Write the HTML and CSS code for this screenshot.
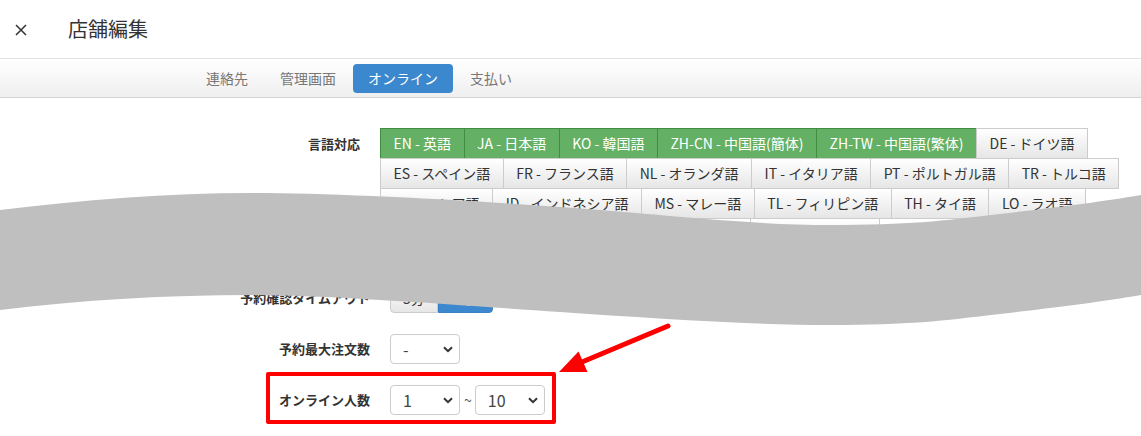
FILE: index.html
```html
<!DOCTYPE html>
<html lang="ja">
<head>
    <meta charset="UTF-8">
    <meta name="viewport" content="width=device-width, initial-scale=1.0">
    <title>店舗編集</title>
    <link rel="stylesheet" href="styles.css">
</head>
<body>

    <header class="modal-header">
        <button class="close" type="button" aria-label="close">
            <svg width="12" height="12" viewBox="0 0 12 12"><path d="M1 1L11 11M11 1L1 11" stroke="#333" stroke-width="1.5" fill="none"/></svg>
        </button>
        <h4 class="modal-title">店舗編集</h4>
    </header>

    <nav class="tab-bar">
        <ul class="tabs">
            <li><a href="#">連絡先</a></li>
            <li><a href="#">管理画面</a></li>
            <li class="active"><a href="#">オンライン</a></li>
            <li><a href="#">支払い</a></li>
        </ul>
    </nav>

    <main class="form">
        <div class="form-row form-row-langs">
            <label class="form-label">言語対応</label>
            <div class="lang-group">
                <button class="lang-btn is-on">EN - 英語</button>
                <button class="lang-btn is-on">JA - 日本語</button>
                <button class="lang-btn is-on">KO - 韓国語</button>
                <button class="lang-btn is-on">ZH-CN - 中国語(簡体)</button>
                <button class="lang-btn is-on">ZH-TW - 中国語(繁体)</button>
                <button class="lang-btn">DE - ドイツ語</button>
                <button class="lang-btn">ES - スペイン語</button>
                <button class="lang-btn">FR - フランス語</button>
                <button class="lang-btn">NL - オランダ語</button>
                <button class="lang-btn">IT - イタリア語</button>
                <button class="lang-btn">PT - ポルトガル語</button>
                <button class="lang-btn">TR - トルコ語</button>
                <button class="lang-btn">RU - ロシア語</button>
                <button class="lang-btn">ID - インドネシア語</button>
                <button class="lang-btn">MS - マレー語</button>
                <button class="lang-btn">TL - フィリピン語</button>
                <button class="lang-btn">TH - タイ語</button>
                <button class="lang-btn">LO - ラオ語</button>
                <button class="lang-btn">VI - ベトナム語</button>
                <button class="lang-btn">KM - クメール語</button>
                <button class="lang-btn">AR - アラビア語</button>
                <button class="lang-btn">MN - モンゴル語</button>
            </div>
        </div>

        <div class="form-row">
            <label class="form-label">予約確認タイムアウト</label>
            <div class="btn-group">
                <button class="opt-btn">5分</button>
                <button class="opt-btn is-on">10分</button>
            </div>
        </div>

        <div class="form-row">
            <label class="form-label">予約最大注文数</label>
            <div class="select">
                <select><option>-</option></select>
                <svg class="caret" width="10" height="7" viewBox="0 0 10 7"><path d="M1 1.2L5 5.2L9 1.2" stroke="#333" stroke-width="2" fill="none"/></svg>
            </div>
        </div>

        <div class="form-row">
            <label class="form-label">オンライン人数</label>
            <div class="range">
                <div class="select">
                    <select><option>1</option></select>
                    <svg class="caret" width="10" height="7" viewBox="0 0 10 7"><path d="M1 1.2L5 5.2L9 1.2" stroke="#333" stroke-width="2" fill="none"/></svg>
                </div>
                <span class="range-sep">~</span>
                <div class="select">
                    <select><option>10</option></select>
                    <svg class="caret" width="10" height="7" viewBox="0 0 10 7"><path d="M1 1.2L5 5.2L9 1.2" stroke="#333" stroke-width="2" fill="none"/></svg>
                </div>
            </div>
        </div>
    </main>

    <!-- cut mark over the skipped part of the form -->
    <svg class="cut" width="1141" height="436" viewBox="0 0 1141 436">
        <path fill="#bfbfbf" d="M0,210 C80,200 170,193 250,193 S450,199 560,207 S750,225 830,225 S940,221 1000,214 S1100,202 1141,195 L1141,295 C1100,302 1060,307 1000,314 S910,325 830,325 S650,318 560,312 S330,295 250,295 S80,300 0,310 Z"/>
    </svg>

    <!-- highlight -->
    <div class="mark-box"></div>
    <svg class="mark-arrow" width="1141" height="436" viewBox="0 0 1141 436">
        <line x1="668" y1="326" x2="582" y2="362" stroke="#f00" stroke-width="5" stroke-linecap="round"/>
        <polygon points="559,372 578.5,351.5 587.5,372" fill="#f00"/>
    </svg>

</body>
</html>
```

FILE: styles.css
```css
body {
    margin: 0;
    font-family: "Noto Sans CJK JP", "Noto Sans", sans-serif;
    font-size: 14px;
    color: #333;
    background-color: #fff;
}
.modal-header {
    display: flex;
    align-items: center;
    height: 58px;
    padding-left: 15px;
}
.close {
    padding: 0;
    margin: 2px 0 0 0;
    width: 12px;
    height: 12px;
    border: none;
    background: none;
    cursor: pointer;
}
.close svg {
    display: block;
}
.modal-title {
    margin: 0 0 0 41px;
    font-size: 20px;
    font-weight: normal;
    line-height: 28px;
}
.tab-bar {
    height: 38px;
    border-top: 1px solid #e3e3e3;
    border-bottom: 1px solid #d3d3d3;
    background: linear-gradient(#fff, #efefef);
    display: flex;
    align-items: center;
}
.tabs {
    display: flex;
    list-style: none;
    margin: 0 0 0 189px;
    padding: 0;
}
.tabs li {
    margin-left: 2px;
}
.tabs a {
    display: block;
    padding: 4px 15px;
    line-height: 21px;
    color: #777;
    text-decoration: none;
    border-radius: 4px;
}
.tabs .active a {
    background-color: #3c88ce;
    color: #fff;
}
.form {
    padding-top: 30px;
}
.form-row {
    display: grid;
    grid-template-columns: 370px auto;
    column-gap: 20px;
    align-items: center;
    justify-content: start;
    margin-bottom: 20px;
}
.form-row-langs {
    grid-template-columns: 360px auto;
    align-items: start;
    margin-bottom: 34px;
}
.form-label {
    text-align: right;
    font-size: 13px;
    font-weight: bold;
    line-height: 31px;
}
.lang-group {
    display: flex;
    flex-wrap: wrap;
    max-width: 745px;
}
.lang-btn, .opt-btn {
    font-family: inherit;
    font-size: 14px;
    line-height: 21px;
    padding: 4px 12.5px;
    color: #333;
    border: 1px solid #ccc;
    background: linear-gradient(#fff, #e6e6e6);
    border-radius: 0;
    cursor: pointer;
}
.lang-btn {
    margin: 0 -1px -1px 0;
}
.lang-btn.is-on {
    color: #fff;
    background: #64b064;
    border-color: #3f8f3f;
}
.btn-group {
    display: flex;
}
.opt-btn {
    line-height: 20px;
    padding: 4px 12px;
}
.opt-btn:first-child {
    border-radius: 4px 0 0 4px;
}
.opt-btn.is-on {
    color: #fff;
    background: #3c88ce;
    border-color: #3a80c2;
    border-radius: 0 4px 4px 0;
}
.select {
    position: relative;
    width: 70px;
}
.select select {
    appearance: none;
    width: 70px;
    height: 30px;
    padding: 0 0 0 12px;
    font-family: inherit;
    font-size: 16px;
    color: #444;
    border: 1px solid #ccc;
    border-radius: 4px;
    background: #fff;
}
.caret {
    position: absolute;
    right: 7px;
    top: 12px;
}
.range {
    display: flex;
    align-items: center;
}
.range-sep {
    margin: 0 3px 0 4px;
    color: #555;
}
.cut, .mark-arrow {
    position: absolute;
    top: 0;
    left: 0;
    pointer-events: none;
}
.mark-box {
    position: absolute;
    left: 266px;
    top: 372px;
    width: 282px;
    height: 44px;
    border: 4px solid #f00;
    border-radius: 2px;
}
```
